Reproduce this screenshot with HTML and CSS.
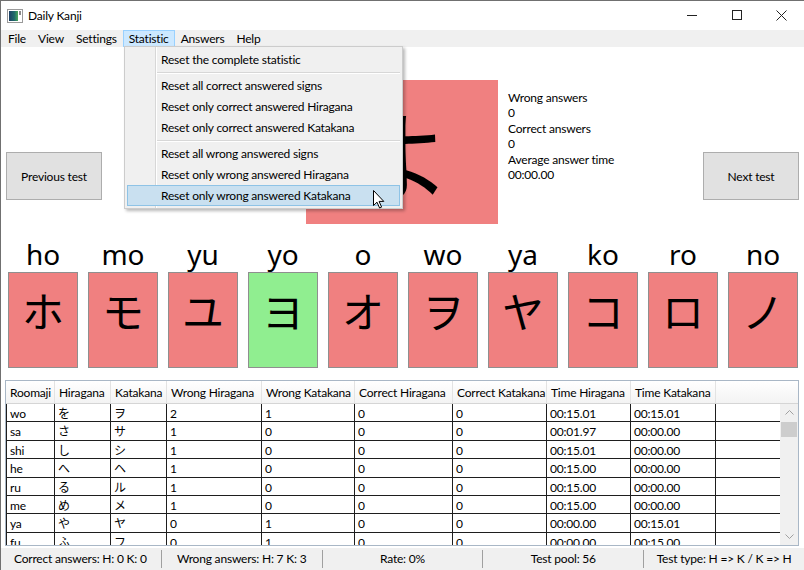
FILE: index.html
```html
<!DOCTYPE html>
<html>
<head>
<meta charset="utf-8">
<title>Daily Kanji</title>
<link rel="stylesheet" href="styles.css">
</head>
<body>
<div class="window">
  <div class="titlebar">
    <svg class="app-icon" width="16" height="14" viewBox="0 0 16 14">
      <defs>
        <linearGradient id="ig" x1="0" y1="0" x2="1" y2="0">
          <stop offset="0" stop-color="#1d3f66"/>
          <stop offset="0.6" stop-color="#1f6b6a"/>
          <stop offset="1" stop-color="#4aa65a"/>
        </linearGradient>
      </defs>
      <rect x="0.5" y="0.5" width="15" height="13" fill="#fff" stroke="#9a9a9a"/>
      <rect x="2" y="2" width="9" height="10" fill="url(#ig)"/>
      <rect x="12" y="2" width="2" height="4" fill="#8a8a8a"/>
    </svg>
    <span class="title">Daily Kanji</span>
    <div class="controls">
      <div class="ctl"><svg width="10" height="10" viewBox="0 0 10 10"><path d="M0 5.5H10" stroke="#222" stroke-width="1"/></svg></div>
      <div class="ctl"><svg width="10" height="10" viewBox="0 0 10 10"><rect x="0.5" y="0.5" width="9" height="9" fill="none" stroke="#222" stroke-width="1"/></svg></div>
      <div class="ctl"><svg width="11" height="11" viewBox="0 0 11 11"><path d="M0.5 0.5L10.5 10.5M10.5 0.5L0.5 10.5" stroke="#222" stroke-width="1"/></svg></div>
    </div>
  </div>

  <div class="menubar">
    <div class="menu-item">File</div>
    <div class="menu-item">View</div>
    <div class="menu-item">Settings</div>
    <div class="menu-item active">Statistic</div>
    <div class="menu-item">Answers</div>
    <div class="menu-item">Help</div>
  </div>

  <div class="content">
    <section class="top">
      <div class="side left">
        <button class="nav">Previous test</button>
      </div>
      <div class="card">よ</div>
      <div class="side right">
        <div class="stats">
          <div>Wrong answers</div>
          <div>0</div>
          <div>Correct answers</div>
          <div>0</div>
          <div>Average answer time</div>
          <div>00:00.00</div>
        </div>
        <button class="nav">Next test</button>
      </div>
    </section>

    <section class="tiles">
      <div class="tile-col"><div class="label">ho</div><div class="tile red">ホ</div></div>
      <div class="tile-col"><div class="label">mo</div><div class="tile red">モ</div></div>
      <div class="tile-col"><div class="label">yu</div><div class="tile red">ユ</div></div>
      <div class="tile-col"><div class="label">yo</div><div class="tile green">ヨ</div></div>
      <div class="tile-col"><div class="label">o</div><div class="tile red">オ</div></div>
      <div class="tile-col"><div class="label">wo</div><div class="tile red">ヲ</div></div>
      <div class="tile-col"><div class="label">ya</div><div class="tile red">ヤ</div></div>
      <div class="tile-col"><div class="label">ko</div><div class="tile red">コ</div></div>
      <div class="tile-col"><div class="label">ro</div><div class="tile red">ロ</div></div>
      <div class="tile-col"><div class="label">no</div><div class="tile red">ノ</div></div>
    </section>

    <section class="datagrid">
      <div class="dg-head">
        <div class="hc">Roomaji</div>
        <div class="hc">Hiragana</div>
        <div class="hc">Katakana</div>
        <div class="hc">Wrong Hiragana</div>
        <div class="hc">Wrong Katakana</div>
        <div class="hc">Correct Hiragana</div>
        <div class="hc">Correct Katakana</div>
        <div class="hc">Time Hiragana</div>
        <div class="hc">Time Katakana</div>
        <div class="hc filler"></div>
      </div>
      <div class="dg-body">
        <div class="dg-rows">
          <div class="dg-row"><div>wo</div><div>を</div><div>ヲ</div><div>2</div><div>1</div><div>0</div><div>0</div><div>00:15.01</div><div>00:15.01</div><div class="fill"></div></div>
          <div class="dg-row"><div>sa</div><div>さ</div><div>サ</div><div>1</div><div>0</div><div>0</div><div>0</div><div>00:01.97</div><div>00:00.00</div><div class="fill"></div></div>
          <div class="dg-row"><div>shi</div><div>し</div><div>シ</div><div>1</div><div>0</div><div>0</div><div>0</div><div>00:15.01</div><div>00:00.00</div><div class="fill"></div></div>
          <div class="dg-row"><div>he</div><div>へ</div><div>ヘ</div><div>1</div><div>0</div><div>0</div><div>0</div><div>00:15.00</div><div>00:00.00</div><div class="fill"></div></div>
          <div class="dg-row"><div>ru</div><div>る</div><div>ル</div><div>1</div><div>0</div><div>0</div><div>0</div><div>00:15.00</div><div>00:00.00</div><div class="fill"></div></div>
          <div class="dg-row"><div>me</div><div>め</div><div>メ</div><div>1</div><div>0</div><div>0</div><div>0</div><div>00:15.00</div><div>00:00.00</div><div class="fill"></div></div>
          <div class="dg-row"><div>ya</div><div>や</div><div>ヤ</div><div>0</div><div>1</div><div>0</div><div>0</div><div>00:00.00</div><div>00:15.01</div><div class="fill"></div></div>
          <div class="dg-row"><div>fu</div><div>ふ</div><div>フ</div><div>0</div><div>1</div><div>0</div><div>0</div><div>00:00.00</div><div>00:15.00</div><div class="fill"></div></div>
        </div>
        <div class="vscroll">
          <div class="arrow"><svg width="9" height="5" viewBox="0 0 9 5"><path d="M0.5 4.5L4.5 0.5L8.5 4.5" fill="none" stroke="#a0a0a0"/></svg></div>
          <div class="thumb"></div>
          <div class="track"></div>
          <div class="arrow"><svg width="9" height="5" viewBox="0 0 9 5"><path d="M0.5 0.5L4.5 4.5L8.5 0.5" fill="none" stroke="#a0a0a0"/></svg></div>
        </div>
      </div>
    </section>
  </div>

  <footer class="status">
    <div>Correct answers: H: 0 K: 0</div>
    <div>Wrong answers: H: 7 K: 3</div>
    <div>Rate: 0%</div>
    <div>Test pool: 56</div>
    <div>Test type: H =&gt; K / K =&gt; H</div>
  </footer>

  <div class="dropdown">
    <div class="dd-item">Reset the complete statistic</div>
    <div class="dd-sep"></div>
    <div class="dd-item">Reset all correct answered signs</div>
    <div class="dd-item">Reset only correct answered Hiragana</div>
    <div class="dd-item">Reset only correct answered Katakana</div>
    <div class="dd-sep"></div>
    <div class="dd-item">Reset all wrong answered signs</div>
    <div class="dd-item">Reset only wrong answered Hiragana</div>
    <div class="dd-item hover">Reset only wrong answered Katakana</div>
  </div>

  <svg class="cursor" width="12" height="19" viewBox="0 0 12 19">
    <path d="M0.5 0.5V15.5L4 12.2L6.6 18L8.6 17.1L6.1 11.4H10.8Z" fill="#fff" stroke="#000" stroke-width="1" stroke-linejoin="round"/>
  </svg>
</div>
</body>
</html>
```

FILE: styles.css
```css
html, body {
  margin: 0;
  padding: 0;
}
body {
  font-family: Lato, "Noto Sans CJK JP", sans-serif;
  font-size: 12px;
  letter-spacing: -0.2px;
  color: #000;
  background: #fff;
}
.window {
  position: relative;
  width: 804px;
  height: 570px;
  overflow: hidden;
  background: #fff;
  display: flex;
  flex-direction: column;
}
.window::after {
  content: "";
  position: absolute;
  inset: 0;
  border-top: 1px solid #707070;
  border-left: 1px solid #707070;
  pointer-events: none;
}

/* title bar */
.titlebar {
  flex: none;
  height: 30px;
  display: flex;
  align-items: center;
  background: #fff;
}
.app-icon {
  margin-left: 7px;
  margin-top: 1px;
}
.title {
  margin-left: 5px;
}
.controls {
  margin-left: auto;
  display: flex;
  height: 100%;
}
.ctl {
  width: 45px;
  display: flex;
  align-items: center;
  justify-content: center;
}

/* menu bar */
.menubar {
  flex: none;
  height: 17px;
  background: #f0f0f0;
  display: flex;
  padding-left: 2px;
}
.menu-item {
  padding: 0 5px;
  line-height: 15px;
  border: 1px solid transparent;
}
.menu-item.active {
  background: #cce8ff;
  border-color: #99d1ff;
}

/* content */
.content {
  flex: none;
  display: flex;
  flex-direction: column;
}
.top {
  display: grid;
  grid-template-columns: 1fr 192px 1fr;
  padding-top: 33px;
}
.side {
  display: flex;
  align-items: flex-start;
}
.left {
  padding-left: 6px;
}
.right {
  padding-left: 10px;
  padding-right: 5px;
}
.nav {
  width: 96px;
  height: 48px;
  margin-top: 72px;
  background: #e1e1e1;
  border: 1px solid #adadad;
  padding: 0;
  font: inherit;
  letter-spacing: inherit;
  color: #000;
}
.right .nav {
  margin-left: auto;
}
.stats {
  margin-top: 10px;
  line-height: 15.4px;
}
.card {
  height: 144px;
  background: #f08080;
  display: flex;
  align-items: center;
  justify-content: center;
  font-family: "Noto Sans CJK JP", sans-serif;
  font-size: 100px;
  line-height: 1;
  letter-spacing: 0;
}

/* tiles */
.tiles {
  display: flex;
  gap: 10px;
  padding-left: 8px;
  margin-top: 15px;
}
.tile-col {
  width: 70px;
  display: flex;
  flex-direction: column;
  align-items: center;
}
.label {
  font-family: "Noto Sans", sans-serif;
  font-size: 28px;
  line-height: 30px;
  height: 30px;
  letter-spacing: 0;
}
.tile {
  margin-top: 3px;
  width: 70px;
  height: 96px;
  box-sizing: border-box;
  border: 1px solid #8f8f8f;
  font-family: "Noto Sans CJK JP", sans-serif;
  font-size: 42px;
  line-height: 42px;
  text-align: center;
  padding-top: 16px;
  letter-spacing: 0;
}
.red {
  background: #f08080;
}
.green {
  background: #90ee90;
}

/* data grid */
.datagrid {
  margin: 12px 5px 0;
  height: 166px;
  box-sizing: border-box;
  border: 1px solid #a9b7c6;
  display: flex;
  flex-direction: column;
}
.dg-head {
  flex: none;
  display: grid;
  grid-template-columns: 49px 56px 56px 95px 93px 98px 94px 84px 85px 1fr;
  height: 23px;
  box-sizing: border-box;
  background: linear-gradient(#ffffff, #f3f3f3);
  border-bottom: 1px solid #d5d5d5;
}
.hc {
  padding-left: 4px;
  line-height: 23px;
  white-space: nowrap;
  overflow: hidden;
  border-right: 1px solid #e3e3e3;
}
.hc.filler {
  border-right: none;
}
.dg-body {
  flex: 1;
  display: flex;
  min-height: 0;
}
.dg-rows {
  flex: 1;
  overflow: hidden;
}
.dg-row {
  display: grid;
  grid-template-columns: 49px 56px 56px 95px 93px 98px 94px 84px 85px 1fr;
  height: 18.4px;
}
.dg-row > div {
  box-sizing: border-box;
  border-right: 1px solid #1e1e1e;
  border-bottom: 1px solid #1e1e1e;
  padding-left: 3px;
  padding-top: 1px;
  line-height: 18px;
  white-space: nowrap;
  overflow: hidden;
}
.dg-row > div:first-child {
  border-left: 1px solid #1e1e1e;
}
.dg-row > div.fill {
  border-right: none;
}
.vscroll {
  flex: none;
  width: 18px;
  background: #f0f0f0;
  display: flex;
  flex-direction: column;
}
.arrow {
  height: 17px;
  display: flex;
  align-items: center;
  justify-content: center;
}
.thumb {
  height: 15px;
  margin: 1px 1px 0;
  background: #cdcdcd;
}
.track {
  flex: 1;
}

/* status bar */
.status {
  flex: none;
  margin-top: 2px;
  height: 22px;
  background: #f0f0f0;
  display: grid;
  grid-template-columns: repeat(5, 1fr);
  align-items: center;
}
.status > div {
  text-align: center;
  line-height: 18px;
  white-space: nowrap;
}
.status > div + div {
  border-left: 1px solid #a0a0a0;
}

/* dropdown menu */
.dropdown {
  position: absolute;
  left: 124px;
  top: 46px;
  width: 279px;
  box-sizing: border-box;
  border: 1px solid #cccccc;
  padding: 2px;
  background-color: #f0f0f0;
  background-image: linear-gradient(to right, transparent 30px, #d7d7d7 30px, #d7d7d7 31px, #ffffff 31px, #ffffff 32px, transparent 32px);
  box-shadow: 2px 2px 3px rgba(0, 0, 0, 0.28);
}
.dd-item {
  height: 21px;
  box-sizing: border-box;
  border: 1px solid transparent;
  padding-left: 33px;
  white-space: nowrap;
  line-height: 20px;
}
.dd-item.hover {
  background: #c9e0f0;
  border-color: #8ec3e6;
}
.dd-sep {
  height: 5px;
  margin-left: 30px;
  background: linear-gradient(transparent 2px, #d7d7d7 2px, #d7d7d7 3px, #ffffff 3px, #ffffff 4px, transparent 4px);
}
.cursor {
  position: absolute;
  left: 373px;
  top: 190px;
}
```
